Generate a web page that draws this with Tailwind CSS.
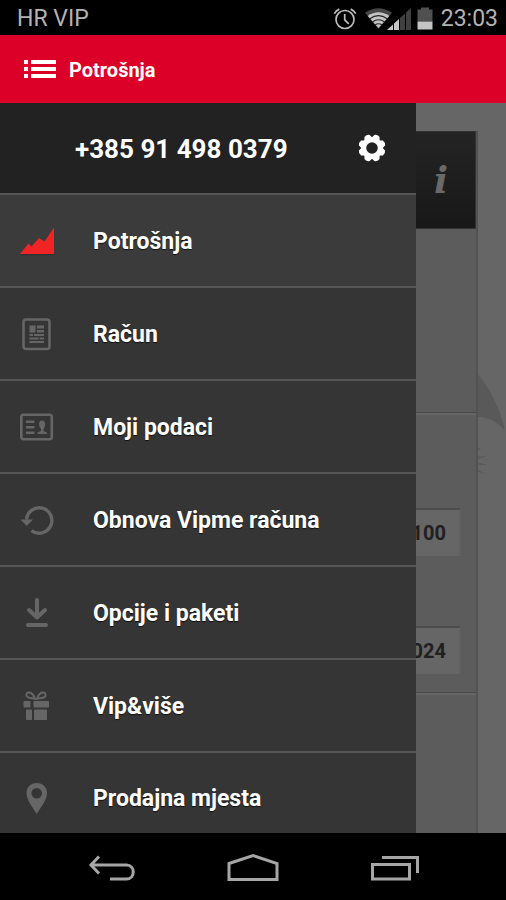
<!DOCTYPE html>
<html lang="hr">
<head>
<meta charset="utf-8">
<meta name="viewport" content="width=device-width, initial-scale=1">
<title>Potrošnja</title>
<script src="https://cdn.jsdelivr.net/npm/@tailwindcss/browser@4"></script>
</head>
<body class="flex h-screen flex-col overflow-hidden bg-black font-['Roboto',sans-serif] text-white">

<!-- System status bar -->
<div class="flex h-[35px] shrink-0 items-center justify-between pt-0.5 pr-2 pl-[17px] text-[23px] leading-[33px] text-[#b3b3b3]">
  <span>HR VIP</span>
  <div class="flex items-center">
    <svg class="mr-[7px] h-6 w-6" viewBox="0 0 24 24" fill="none" stroke="#bdbdbd" stroke-width="1.7" aria-label="Alarm">
      <circle cx="12" cy="12.500" r="9"/>
      <path d="M11.700 7v5.800l4 4M1.300 6.700Q2.800 3.500 6.300 2.100M22.700 6.700Q21.200 3.500 17.700 2.100" />
    </svg>
    <svg class="mr-[5px] h-6 w-12" viewBox="0 0 48 24" aria-label="Wi-Fi i mobilni signal">
      <path d="M1 5.800Q14.500-3.500 28 5.800L14.500 22Z" fill="#464646"/>
      <path d="M3.700 9Q14.500 1.500 25.300 9L14.500 21Z" fill="#c4c4c4"/>
      <path d="M5.800 11.700Q14.500 5.600 23.200 11.700M8.400 14.900Q14.500 10.600 20.600 14.900M11 18Q14.500 15.500 18 18" fill="none" stroke="#222" stroke-width="1.200"/>
      <path d="M22 24L47 0V24Z" fill="#000"/>
      <path d="M23 23L29 17.500V23ZM30 16.500L35 12V23H30Z" fill="#c4c4c4"/>
      <path d="M36 11L41 6.500V23H36ZM42 5.500L47 1V23H42Z" fill="#404040"/>
    </svg>
    <svg class="mr-2 h-6 w-4" viewBox="0 0 16 24" aria-label="Baterija">
      <path d="M4 .500H12V2.500H15.500V14.500H.500V2.500H4Z" fill="#505050"/>
      <path d="M.500 14.500H15.500V22.500H.500Z" fill="#c4c4c4"/>
    </svg>
    <span>23:03</span>
  </div>
</div>

<!-- App bar -->
<header class="flex h-[68px] shrink-0 items-center bg-[#dc0028] pl-6">
  <button type="button" aria-label="Izbornik" class="mr-[13px]">
    <svg class="h-[18px] w-8" viewBox="0 0 32 18" fill="#fff">
      <path d="M0 0h4v4H0zM7 0h25v4H7zM0 7h4v4H0zM7 7h25v4H7zM0 14h4v4H0zM7 14h25v4H7z"/>
    </svg>
  </button>
  <h1 class="pt-0.5 text-[20px] leading-6 font-bold">Potrošnja</h1>
</header>

<div class="relative min-h-0 flex-1 overflow-hidden bg-[#666]">
  <!-- Decorative backdrop beside the card -->
  <svg class="absolute top-[266px] right-0 h-[110px] w-[30px]" viewBox="0 0 30 110" fill="#595959">
    <path d="M0 3Q22 29 29 62Q17 47 0 48Z"/>
    <path d="M0 80L5 78L0 85ZM0 88L12 86.500L0 91ZM0 93L12 96L0 96ZM0 99L9 105L0 102Z"/>
  </svg>

  <!-- Dimmed page -->
  <main class="flex h-full flex-col px-[30px] pt-7">
    <section class="relative -mr-0.5 flex flex-1 flex-col border-r-2 border-[#525252] bg-[#5c5c5c]">
      <div class="flex h-[98px] shrink-0 items-center justify-end border border-[#333] bg-linear-to-b from-[#242424] to-[#181818] pr-[27px]">
        <button type="button" class="font-['DejaVu_Serif',serif] text-[37px] leading-[42px] font-bold text-[#696969] italic">i</button>
      </div>
      <div class="h-[184px] shrink-0 border-b border-[#474747]"></div>
      <div class="flex h-[280px] shrink-0 flex-col justify-end gap-[70px] border-t-2 border-b border-t-[#666] border-b-[#474747] pr-[15px] pb-[18px] pl-4 text-right text-[20px] leading-[46px] font-bold text-[#202020]">
        <div class="h-12 border-t-2 border-r-2 border-t-[#4c4c4c] border-r-[#606060] bg-[#666] pr-[13px]">100</div>
        <div class="h-12 border-t-2 border-r-2 border-t-[#4c4c4c] border-r-[#606060] bg-[#666] pr-[13px]">024</div>
      </div>
      <div class="flex-1 border-t-2 border-[#666]"></div>
    </section>
  </main>

  <!-- Navigation drawer -->
  <aside class="absolute inset-y-0 left-0 w-[calc(100%-90px)] overflow-hidden bg-[#353535]">
    <div class="flex h-[92px] items-center justify-between border-b-2 border-[#555] bg-[#222] pr-[30px] pl-[75px]">
      <span class="pt-0.5 text-[26px] leading-8 font-bold">+385 91 498 0379</span>
      <button type="button" aria-label="Postavke">
        <svg class="h-7 w-7" viewBox="-14 -14 28 28" fill="#fff">
          <circle r="8.400" fill="none" stroke="#fff" stroke-width="5.200"/>
          <g id="teeth"><path id="tooth" d="M-4.200-9.500L-2.800-13Q0-14.600 2.800-13L4.200-9.500Z" transform="rotate(22.500)"/>
          <use href="#tooth" transform="rotate(45)"/><use href="#tooth" transform="rotate(90)"/><use href="#tooth" transform="rotate(135)"/></g>
          <use href="#teeth" transform="rotate(180)"/>
        </svg>
      </button>
    </div>
    <nav class="text-[23px] leading-7 font-bold [text-shadow:0_1px_1px_#111]">
      <a href="#" class="flex h-[93px] items-center gap-9 border-b-2 border-[#555] bg-[#3b3b3b] pl-[19px]">
        <svg class="h-9 w-9 shrink-0" viewBox="0 0 36 36"><path d="M.500 31.500L9.500 20.500L12.500 23.500L20 15L25.500 18.500L35 4.500V31.500Z" fill="#f02424"/><path d="M1 31.700H35" stroke="#173536"/></svg>
        <span class="pt-0.5 pl-0.5">Potrošnja</span>
      </a>
      <a href="#" class="flex h-[93px] items-center gap-9 border-b-2 border-[#555] pl-[19px]">
        <svg class="h-9 w-9 shrink-0" viewBox="0 0 36 36" fill="#666"><rect x="4.500" y="3.500" width="26" height="29.500" rx="2.500" fill="none" stroke="#666" stroke-width="2.600"/><path d="M10.500 9.500h6v7h-6zM18 9.500h7v3h-7zM18 14h7v2.500h-7zM10.500 18h3.500v2h-3.500zM15 18h10v2H15zM10.500 21.500h9v2h-9zM20.500 21.500h4.500v2h-4.500zM10.500 25h14.500v2h-14.500z"/></svg>
        <span class="pt-0.5 pl-0.5">Račun</span>
      </a>
      <a href="#" class="flex h-[93px] items-center gap-9 border-b-2 border-[#555] pl-[19px]">
        <svg class="h-9 w-9 shrink-0" viewBox="0 0 36 36" fill="#666"><rect x="2.300" y="5.800" width="30.500" height="24.500" rx="2.200" fill="none" stroke="#666" stroke-width="2.600"/><path d="M7 11.500h8.500v2.500H7zM7 17h8.500v2.500H7zM7 22.500h8.500v2.500H7zM23 11.500C27.500 11.500 26.500 18 24.500 20V22L28 23.500V25H18.500V23.500L22 22V20C19.500 17 19 11.500 23 11.500Z"/></svg>
        <span class="pt-0.5 pl-0.5">Moji podaci</span>
      </a>
      <a href="#" class="flex h-[93px] items-center gap-9 border-b-2 border-[#555] pl-[19px]">
        <svg class="h-9 w-9 shrink-0" viewBox="0 0 36 36"><path d="M7.500 17.500A12.700 12.700 0 1 1 12.500 28.600" fill="none" stroke="#666" stroke-width="3.400"/><path d="M1.500 17.500H14L7.700 24Z" fill="#666"/></svg>
        <span class="pt-0.5 pl-0.5">Obnova Vipme računa</span>
      </a>
      <a href="#" class="flex h-[93px] items-center gap-9 border-b-2 border-[#555] pl-[19px]">
        <svg class="h-9 w-9 shrink-0" viewBox="0 0 36 36" fill="none" stroke="#666" stroke-width="4" stroke-linecap="round" stroke-linejoin="round"><path d="M18 5V22M10 15L18 22.500L26 15M9 30H27"/></svg>
        <span class="pt-0.5 pl-0.5">Opcije i paketi</span>
      </a>
      <a href="#" class="flex h-[93px] items-center gap-9 border-b-2 border-[#555] pl-[19px]">
        <svg class="h-9 w-9 shrink-0" viewBox="0 0 36 36" fill="#666"><rect x="4.500" y="13" width="7" height="6.500" rx=".8"/><rect x="14.500" y="13" width="15.500" height="6.500" rx=".8"/><rect x="7" y="21.500" width="6" height="10.500" rx=".8"/><rect x="15" y="21.500" width="13" height="10.500" rx=".8"/><path d="M16 11C13.500 3 6.500 3 7.500 7.500C8.500 11 13 9.500 17 11C21 9.500 26 11 26.500 7.500C27 3 20.500 3 18 11" fill="none" stroke="#666" stroke-width="2"/></svg>
        <span class="pt-0.5 pl-0.5">Vip&amp;više</span>
      </a>
      <a href="#" class="flex h-[91px] items-center gap-9 pl-[19px]">
        <svg class="h-9 w-9 shrink-0" viewBox="0 0 36 36" fill="#666"><path fill-rule="evenodd" d="M17.700 2C11.500 2 7.500 6.500 7.500 12C7.500 18 12 24 17.700 33C23.500 24 28 18 28 12C28 6.500 24 2 17.700 2ZM17.700 7A5.300 5.300 0 1 1 17.700 17.600A5.300 5.300 0 1 1 17.700 7Z"/></svg>
        <span class="pl-0.5">Prodajna mjesta</span>
      </a>
    </nav>
  </aside>
</div>

<!-- System navigation bar -->
<div class="flex h-[67px] shrink-0 items-center justify-center gap-[91px] pt-0.5">
  <button type="button" aria-label="Natrag">
    <svg class="h-8 w-[50px]" viewBox="0 0 50 32" fill="none" stroke="#a6a6a6" stroke-width="3"><path d="M4 13H40.500C49.500 13 49.500 27 40.500 27H24M13 4.500L5 13L13 21.500"/></svg>
  </button>
  <button type="button" aria-label="Početna">
    <svg class="h-8 w-[52px]" viewBox="0 0 52 32" fill="none" stroke="#a6a6a6" stroke-width="3"><path d="M2 11.500L26 3.500L50 11.500V27.500H2Z"/></svg>
  </button>
  <button type="button" aria-label="Nedavne aplikacije">
    <svg class="h-8 w-[50px]" viewBox="0 0 50 32" fill="none" stroke="#a6a6a6" stroke-width="3"><path d="M2.500 12.500H39.500V27H2.500ZM12 5.500H47.500V21"/></svg>
  </button>
</div>
</body>
</html>
